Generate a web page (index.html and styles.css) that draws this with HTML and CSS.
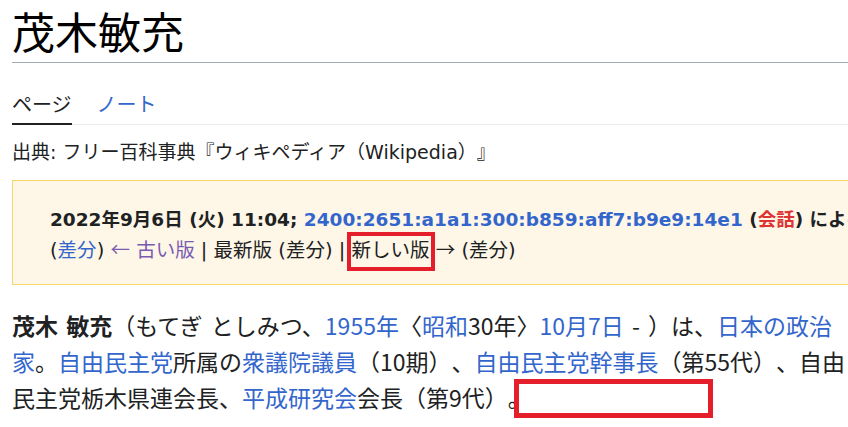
FILE: index.html
```html
<!DOCTYPE html>
<html lang="ja">
<head>
<meta charset="utf-8">
<title>茂木敏充</title>
<link rel="stylesheet" href="styles.css">
</head>
<body>
<div class="page">
  <div class="content">
    <h1 class="title">茂木敏充</h1>
    <nav class="tabs">
      <span class="tab tab-active">ページ</span>
      <a class="tab tab-link" href="#">ノート</a>
    </nav>
    <div class="site-sub">出典: フリー百科事典『ウィキペディア（Wikipedia）』</div>
    <div class="revbox">
      <div class="rev-head"><b>2022年9月6日 (火) 11:04; <a class="link" href="#">2400:2651:a1a1:300:b859:aff7:b9e9:14e1</a> (<a class="redlink" href="#">会話</a>) による版</b></div>
      <div class="rev-nav">(<a class="link" href="#">差分</a>) <a class="visited" href="#"><span class="arrow">←</span> 古い版</a> | 最新版 (差分) | <span class="mark">新しい版</span> <span class="arrow">→</span> (差分)</div>
    </div>
    <p class="lead"><b>茂木 敏充</b>（もてぎ としみつ、<a class="link" href="#">1955年</a>〈<a class="link" href="#">昭和</a>30年〉<a class="link" href="#">10月7日</a> - ）は、<a class="link" href="#">日本の政治家</a>。<a class="link" href="#">自由民主党</a>所属の<a class="link" href="#">衆議院議員</a>（10期）、<a class="link" href="#">自由民主党幹事長</a>（第55代）、自由民主党栃木県連会長、<a class="link" href="#">平成研究会</a>会長（第9代）。<span class="mark-empty"></span></p>
  </div>
</div>
</body>
</html>
```

FILE: styles.css
```css
html, body {
  margin: 0;
  padding: 0;
  background: #ffffff;
  text-spacing-trim: space-all;
}

.page {
  width: 848px;
  height: 427px;
  overflow: hidden;
}

.content {
  width: 846px;
  margin-left: 12px;
  color: #202122;
  font-family: "Noto Sans CJK JP", sans-serif;
}

a {
  text-decoration: none;
}

.link {
  color: #3366cc;
}

.visited {
  color: #795cb2;
}

.redlink {
  color: #d33;
}

.title {
  margin: 0;
  padding: 4px 0 6px 0;
  font-size: 43px;
  line-height: 52px;
  font-weight: 400;
  color: #000;
  border-bottom: 1px solid #a2a9b1;
}

.tabs {
  display: flex;
  gap: 25px;
  margin-top: 27px;
  border-bottom: 1px solid #eaecf0;
}

.tab {
  font-size: 20px;
  line-height: 28px;
  padding-bottom: 5px;
  margin-bottom: -1px;
  border-bottom: 2px solid transparent;
}

.tab-active {
  color: #202122;
  border-bottom-color: #202122;
}

.tab-link {
  color: #3366cc;
}

.site-sub {
  margin-top: 14px;
  font-family: "DejaVu Sans", "Noto Sans CJK JP", sans-serif;
  font-size: 19px;
  line-height: 26px;
}

.revbox {
  margin-top: 15px;
  width: 1100px;
  padding: 24px 0 19px 37px;
  background: #fef6e7;
  border: 1px solid #f6d56a;
  font-family: "DejaVu Sans", "Noto Sans CJK JP", sans-serif;
  line-height: 29px;
  white-space: nowrap;
}

.rev-head {
  font-size: 18.5px;
}

.rev-head b {
  font-weight: 700;
}

.rev-nav {
  font-size: 19.5px;
}

.arrow {
  font-family: "Noto Sans CJK JP", sans-serif;
}

.mark {
  position: relative;
}

.mark::after {
  content: "";
  position: absolute;
  top: 50%;
  height: 39px;
  margin-top: -19px;
  left: -5px;
  right: -5px;
  box-sizing: border-box;
  border: 4px solid #e41e2b;
}

.lead {
  margin: 22px 0 0 0;
  font-size: 23px;
  line-height: 36px;
  word-spacing: 3px;
}

.lead b {
  font-weight: 700;
}

.mark-empty {
  display: inline-block;
  box-sizing: border-box;
  width: 199px;
  height: 39px;
  margin: 0 0 0 -17px;
  vertical-align: top;
  border: 5px solid #e41e2b;
}
```
